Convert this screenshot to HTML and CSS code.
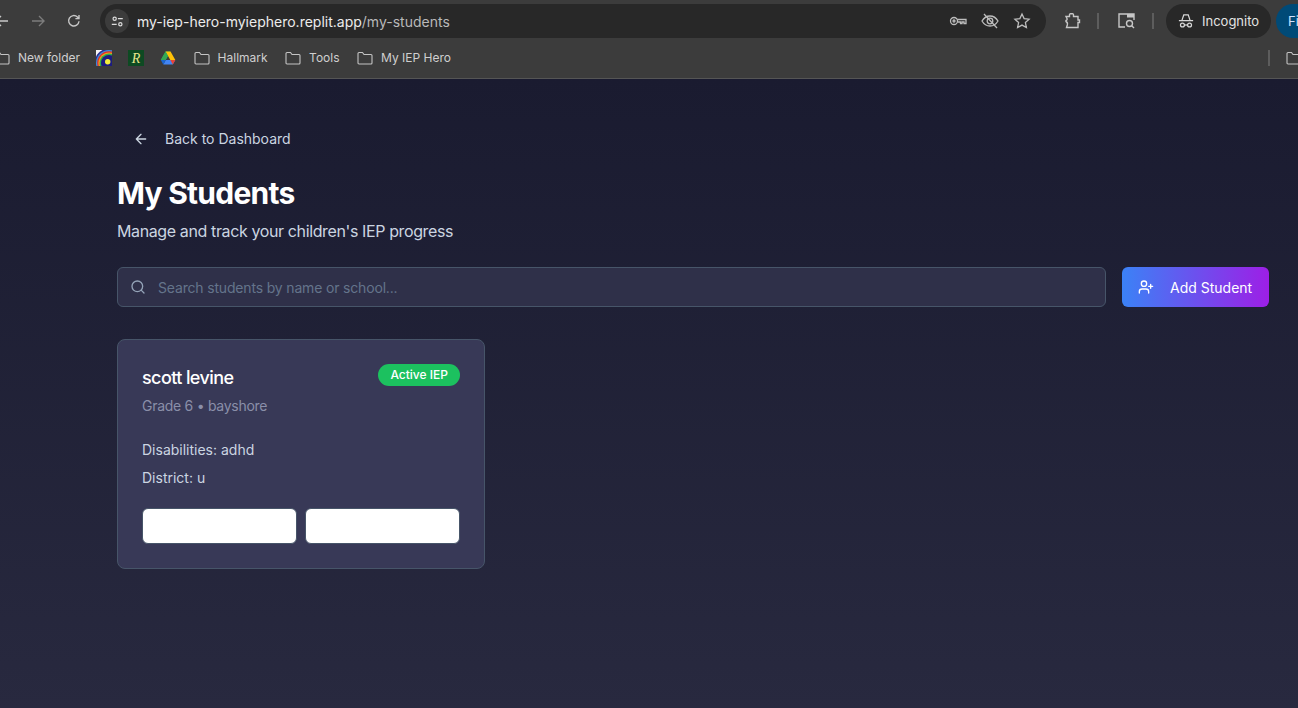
FILE: index.html
```html
<!DOCTYPE html>
<html lang="en">
<head>
<meta charset="utf-8">
<title>My Students</title>
<link rel="stylesheet" href="styles.css">
</head>
<body>
<header class="chrome">
  <div class="toolbar">
    <svg class="tb-icon back" viewBox="0 0 16 16"><path d="M14 8H2M7 3 2 8l5 5"/></svg>
    <svg class="tb-icon forward" viewBox="0 0 16 16"><path d="M2 8h12M9 3l5 5-5 5"/></svg>
    <svg class="tb-icon reload" viewBox="0 0 16 16"><path d="M13 8.300A5.200 5.200 0 1 1 11.400 4L13 5.500M13 2v3.600H9.400"/></svg>
    <div class="omnibox">
      <span class="site-chip"><svg viewBox="0 0 16 16"><circle cx="4.500" cy="4.500" r="2"/><path d="M8.500 4.500h6M1 11.500h6"/><circle cx="11.500" cy="11.500" r="2"/></svg></span>
      <span class="url"><span class="url-host">my-iep-hero-myiephero.replit.app</span>/my-students</span>
      <svg class="omni-icon" viewBox="0 0 18 18"><circle cx="5" cy="9" r="3.500"/><circle cx="5" cy="9" r="1"/><path d="M8.500 7.500h8.500v4h-2v-1.500h-2v1.500h-1.500v-1.500h-3"/></svg>
      <svg class="omni-icon" viewBox="0 0 18 18"><path d="M1 9s3-5 8-5 8 5 8 5-3 5-8 5-8-5-8-5z"/><circle cx="9" cy="9" r="2.800"/><path d="M3 2l13 14"/></svg>
      <svg class="omni-icon star" viewBox="0 0 18 18"><path d="m9 2 2.100 4.600 5 .6-3.700 3.400 1 5L9 13.100 4.600 15.600l1-5L1.900 7.200l5-.6z"/></svg>
    </div>
    <svg class="tb-icon ext" viewBox="0 0 18 18"><path d="M3 4.500h3.500V3a1 1 0 0 1 1-1.200h2A1 1 0 0 1 10.500 3v1.500H15v3.500h1.500v2.500H15V15.500H3.500l.8-2.500q.7-2.500-1.300-3.500V8.500q1.500-.5 1-2z"/></svg>
    <span class="divider"></span>
    <svg class="tb-icon cast" viewBox="0 0 18 18"><path d="M8 15H2V2h15v6"/><rect class="fill" x="10" y="2" width="7" height="3.500"/><circle cx="12.500" cy="11.500" r="3"/><path d="m14.700 13.700 2.300 2.300"/></svg>
    <span class="divider"></span>
    <div class="incognito">
      <svg viewBox="0 0 18 18"><path d="M4.500 8l2-6h5l2 6M1 8.500h16"/><circle cx="5" cy="13.500" r="2.200"/><circle cx="13" cy="13.500" r="2.200"/><path d="M7.200 13.500h3.600"/></svg>
      <span>Incognito</span>
    </div>
    <span class="avatar">Fi</span>
  </div>
  <nav class="bookmarks">
    <span class="bm first"><svg class="folder" viewBox="0 0 16 14"><path d="M1 2.500a1 1 0 0 1 1-1h3.500l1.500 2h7a1 1 0 0 1 1 1v7.500a1 1 0 0 1-1 1H2a1 1 0 0 1-1-1z"/></svg><span>New folder</span></span>
    <svg class="fav" viewBox="0 0 16 16"><rect width="16" height="16" fill="#f6f6f6"/><circle cx="13" cy="13" r="14.500" fill="#2a2a90"/><circle cx="13" cy="13" r="13" fill="#3f8fd8"/><circle cx="13" cy="13" r="11.800" fill="#e02a2a"/><circle cx="13" cy="13" r="10.600" fill="#f09a20"/><circle cx="13" cy="13" r="9.400" fill="#2fae46"/><circle cx="13" cy="13" r="8" fill="#1c1c80"/><circle cx="11.700" cy="11.700" r="2.700" fill="#f3ee3c"/></svg>
    <svg class="fav" viewBox="0 0 16 16"><rect width="16" height="16" fill="#0d4a22"/><text class="fav-r" x="8" y="13">R</text></svg>
    <svg class="fav" viewBox="0 0 16 16"><path d="M5.500 1.500h5L5.700 10H.8z" fill="#1fa463"/><path d="M5.500 1.500h5L15.300 10h-5z" fill="#ffc107"/><path d="M3.300 14.500 5.700 10h9.600l-2.500 4.500z" fill="#4285f4"/><path d="M.8 10h4.900l-2.400 4.500z" fill="#1967d2"/><path d="M5.500 1.500 8 6 5.700 10H.8z" fill="#34a853"/><path d="M15.300 10 12.800 14.500 10.300 10z" fill="#ea4335"/></svg>
    <span class="bm"><svg class="folder" viewBox="0 0 16 14"><path d="M1 2.500a1 1 0 0 1 1-1h3.500l1.500 2h7a1 1 0 0 1 1 1v7.500a1 1 0 0 1-1 1H2a1 1 0 0 1-1-1z"/></svg><span>Hallmark</span></span>
    <span class="bm"><svg class="folder" viewBox="0 0 16 14"><path d="M1 2.500a1 1 0 0 1 1-1h3.500l1.500 2h7a1 1 0 0 1 1 1v7.500a1 1 0 0 1-1 1H2a1 1 0 0 1-1-1z"/></svg><span>Tools</span></span>
    <span class="bm"><svg class="folder" viewBox="0 0 16 14"><path d="M1 2.500a1 1 0 0 1 1-1h3.500l1.500 2h7a1 1 0 0 1 1 1v7.500a1 1 0 0 1-1 1H2a1 1 0 0 1-1-1z"/></svg><span>My IEP Hero</span></span>
    <span class="bm-end"><span class="divider"></span><svg class="folder" viewBox="0 0 16 14"><path d="M1 2.500a1 1 0 0 1 1-1h3.500l1.500 2h7a1 1 0 0 1 1 1v7.500a1 1 0 0 1-1 1H2a1 1 0 0 1-1-1z"/></svg></span>
  </nav>
</header>
<main class="page">
  <a class="back-link">
    <svg viewBox="0 0 24 24"><path d="M19 12H5M12 19l-7-7 7-7"/></svg>
    <span>Back to Dashboard</span>
  </a>
  <h1 class="title">My Students</h1>
  <p class="subtitle">Manage and track your children's IEP progress</p>
  <div class="actions">
    <div class="search">
      <svg viewBox="0 0 24 24"><circle cx="11" cy="11" r="8"/><path d="m21 21-4.300-4.300"/></svg>
      <span>Search students by name or school...</span>
    </div>
    <button class="add-btn">
      <svg viewBox="0 0 24 24"><path d="M16 21v-2a4 4 0 0 0-4-4H6a4 4 0 0 0-4 4v2"/><circle cx="9" cy="7" r="4"/><path d="M19 8v6M22 11h-6"/></svg>
      <span>Add Student</span>
    </button>
  </div>
  <div class="grid">
    <article class="card">
      <div class="card-head">
        <div>
          <h2 class="name">scott levine</h2>
          <p class="meta">Grade 6 • bayshore</p>
        </div>
        <span class="badge">Active IEP</span>
      </div>
      <div class="details">
        <p>Disabilities: adhd</p>
        <p>District: u</p>
      </div>
      <div class="card-actions">
        <button class="white-btn"></button>
        <button class="white-btn"></button>
      </div>
    </article>
  </div>
</main>
</body>
</html>
```

FILE: styles.css
```css
* { box-sizing: border-box; }
html, body { margin: 0; height: 100%; }
body {
  width: 1298px;
  height: 708px;
  overflow: hidden;
  display: flex;
  flex-direction: column;
  font-family: Inter, "Liberation Sans", sans-serif;
  background: #1a1b2f;
}
p, h1, h2 { margin: 0; }

.chrome {
  height: 79px;
  background: #3c3c3c;
  border-bottom: 1px solid #555;
  color: #e3e3e3;
  flex: none;
}
.toolbar {
  height: 40px;
  padding-top: 2px;
  display: flex;
  align-items: center;
}
.tb-icon { fill: none; stroke: #c7c7c7; stroke-width: 1.4; width: 16px; height: 16px; flex: none; }
.back { margin-left: -6px; }
.forward { margin-left: 20px; stroke: #7c7c7c; }
.reload { margin-left: 20px; }
.omnibox {
  margin-left: 18px;
  width: 946px;
  height: 34px;
  background: #282828;
  border-radius: 17px;
  display: flex;
  align-items: center;
  padding: 0 15px 0 5px;
  gap: 14px;
  flex: none;
}
.site-chip {
  width: 24px;
  height: 24px;
  border-radius: 50%;
  background: #3c3c3c;
  display: flex;
  align-items: center;
  justify-content: center;
  flex: none;
}
.site-chip svg { width: 13px; height: 13px; fill: none; stroke: #dcdcdc; stroke-width: 1.500; }
.url { flex: 1; margin-left: -6px; font-size: 14px; color: #b9b9b9; white-space: nowrap; }
.url-host { color: #ececec; }
.omni-icon { width: 18px; height: 18px; fill: none; stroke: #bdbdbd; stroke-width: 1.300; flex: none; }
.ext { width: 18px; height: 18px; margin-left: 17px; }
.divider { width: 2px; height: 16px; background: #5d5d5d; flex: none; }
.toolbar > .divider:first-of-type { margin-left: 16px; }
.cast { width: 18px; height: 18px; margin-left: 18px; }
.cast .fill { fill: #c7c7c7; stroke: none; }
.cast + .divider { margin-left: 17px; }
.incognito {
  margin-left: 12px;
  width: 105px;
  height: 34px;
  border-radius: 17px;
  background: #282828;
  display: flex;
  align-items: center;
  padding-left: 12px;
  gap: 8px;
  font-size: 13px;
  color: #e3e3e3;
  flex: none;
}
.incognito svg { width: 16px; height: 16px; fill: none; stroke: #d8d8d8; stroke-width: 1.400; }
.avatar {
  margin-left: 5px;
  width: 40px;
  height: 34px;
  border-radius: 17px;
  background: #004a77;
  color: #d3e3fd;
  font-size: 13px;
  padding: 9px 0 0 12px;
  flex: none;
}

.bookmarks {
  height: 36px;
  display: flex;
  align-items: center;
  font-size: 12px;
  color: #cfcfcf;
}
.bm { display: flex; align-items: center; gap: 8px; white-space: nowrap; }
.bm span { margin-bottom: 2px; }
.first { margin-left: -6px; }
.folder { width: 16px; height: 14px; fill: none; stroke: #c4c4c4; stroke-width: 1.100; flex: none; }
.fav { width: 16px; height: 16px; margin-left: 16px; flex: none; }
.fav + .bm { margin-left: 17.500px; }
.bm + .bm { margin-left: 17.500px; }
.bm + .fav { margin-left: 16px; }
.fav-r { font-family: "Liberation Serif", serif; font-style: italic; font-size: 14px; fill: #e6e68c; text-anchor: middle; }
.bm-end { margin-left: auto; margin-right: -4px; display: flex; align-items: center; gap: 16px; }

.page {
  flex: 1;
  padding: 44px 29px 0 117px;
  background: linear-gradient(180deg, #1a1b30 0%, #28293f 100%);
  min-height: 0;
}
.back-link {
  display: flex;
  align-items: center;
  height: 32px;
  padding-left: 16px;
  gap: 16px;
  font-size: 14px;
  font-weight: 400;
  color: #cbd5e1;
}
.back-link span { margin-bottom: 2px; }
.back-link svg { width: 16px; height: 16px; fill: none; stroke: #cbd5e1; stroke-width: 2; stroke-linecap: round; stroke-linejoin: round; }
.title { margin-top: 20px; font-size: 30px; line-height: 36px; font-weight: 700; letter-spacing: -.75px; color: #fff; }
.subtitle { margin-top: 8px; font-size: 16px; line-height: 24px; letter-spacing: -.38px; color: #cbd5e1; }
.actions { margin-top: 24px; display: flex; gap: 16px; }
.search {
  flex: 1;
  height: 40px;
  background: #2f3049;
  border: 1px solid #475569;
  border-radius: 6px;
  display: flex;
  align-items: center;
  padding-left: 12px;
  gap: 12px;
  font-size: 14px;
  letter-spacing: -.17px;
  color: #64748b;
}
.search svg { width: 16px; height: 16px; fill: none; stroke: #94a3b8; stroke-width: 2; stroke-linecap: round; stroke-linejoin: round; }
.add-btn {
  width: 147px;
  height: 40px;
  border: 0;
  border-radius: 6px;
  background: linear-gradient(90deg, #3b82f6, #9d1fe6);
  color: #fff;
  font: 400 14px Inter, "Liberation Sans", sans-serif;
  display: flex;
  align-items: center;
  padding: 0 0 0 16px;
  gap: 16px;
}
.add-btn svg { width: 16px; height: 16px; fill: none; stroke: #fff; stroke-width: 2; stroke-linecap: round; stroke-linejoin: round; }
.grid { margin-top: 32px; display: grid; grid-template-columns: repeat(3, 368px); gap: 24px; }
.card {
  height: 230px;
  background: #383957;
  border: 1px solid #475569;
  border-radius: 8px;
  padding: 24px;
}
.card-head { display: flex; justify-content: space-between; align-items: flex-start; }
.name { font-size: 18px; line-height: 28px; font-weight: 500; letter-spacing: -.6px; color: #fff; }
.meta { font-size: 14px; line-height: 28px; letter-spacing: -.28px; color: #8a8fa9; }
.badge {
  background: #1cc15f;
  color: #fff;
  font-size: 12px;
  font-weight: 500;
  line-height: 16px;
  padding: 3px 12px;
  border-radius: 11px;
  height: 22px;
}
.details { margin-top: 20px; font-size: 14px; line-height: 20px; color: #cbd5e1; display: flex; flex-direction: column; gap: 8px; }
.card-actions { margin-top: 20px; display: flex; gap: 8px; }
.white-btn {
  flex: 1;
  height: 36px;
  background: #fff;
  border: 1px solid #475569;
  border-radius: 6px;
  padding: 0;
}
```
